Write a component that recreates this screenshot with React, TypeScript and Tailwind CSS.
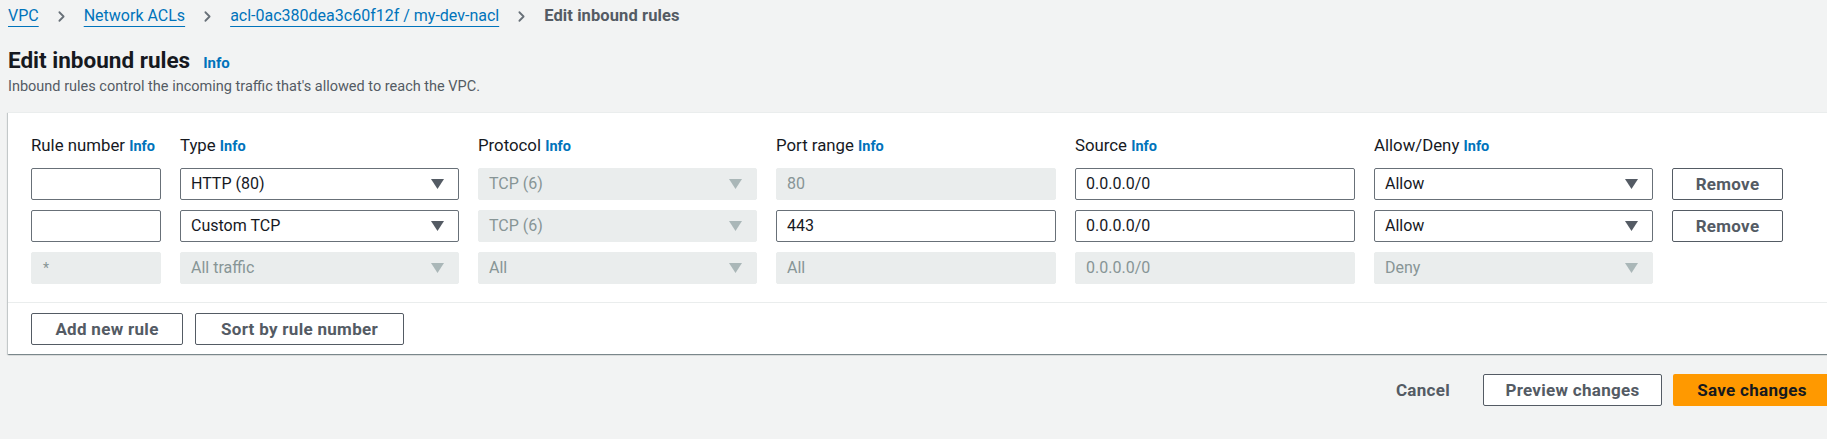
import { ChevronRight } from 'lucide-react'

// --- Types ---
type Cell =
  | { kind: 'input'; value: string; disabled?: boolean }
  | { kind: 'select'; value: string; disabled?: boolean }

type Rule = {
  cells: Cell[]
  removable: boolean
}

const font = { fontFamily: 'Roboto, "Open Sans", Arial, sans-serif' }

const rules: Rule[] = [
  {
    cells: [
      { kind: 'input', value: '' },
      { kind: 'select', value: 'HTTP (80)' },
      { kind: 'select', value: 'TCP (6)', disabled: true },
      { kind: 'input', value: '80', disabled: true },
      { kind: 'input', value: '0.0.0.0/0' },
      { kind: 'select', value: 'Allow' },
    ],
    removable: true,
  },
  {
    cells: [
      { kind: 'input', value: '' },
      { kind: 'select', value: 'Custom TCP' },
      { kind: 'select', value: 'TCP (6)', disabled: true },
      { kind: 'input', value: '443' },
      { kind: 'input', value: '0.0.0.0/0' },
      { kind: 'select', value: 'Allow' },
    ],
    removable: true,
  },
  {
    cells: [
      { kind: 'input', value: '*', disabled: true },
      { kind: 'select', value: 'All traffic', disabled: true },
      { kind: 'select', value: 'All', disabled: true },
      { kind: 'input', value: 'All', disabled: true },
      { kind: 'input', value: '0.0.0.0/0', disabled: true },
      { kind: 'select', value: 'Deny', disabled: true },
    ],
    removable: false,
  },
]

const headers = ['Rule number', 'Type', 'Protocol', 'Port range', 'Source', 'Allow/Deny']

// --- Small pieces ---
const Caret: React.FC<{ disabled?: boolean }> = ({ disabled }) => (
  <svg width="13" height="10" viewBox="0 0 13 10" className="shrink-0">
    <path d="M0 0 H13 L6.5 10 Z" fill={disabled ? '#aab7b8' : '#545b64'} />
  </svg>
)

const Field: React.FC<{ cell: Cell }> = ({ cell }) => {
  const base = cell.disabled
    ? 'bg-[#eaeded] border-[#eaeded] text-[#879596]'
    : 'bg-white border-[#687078] text-[#16191f]'
  return (
    <div className={`h-8 flex items-center justify-between border rounded-[2px] pl-[10px] pr-[14px] text-[16px] ${base}`}>
      <span className={cell.value === '*' ? 'text-[14px] pl-[1px]' : ''}>{cell.value}</span>
      {cell.kind === 'select' && <Caret disabled={cell.disabled} />}
    </div>
  )
}

const Button: React.FC<{ label: string; className?: string }> = ({ label, className = '' }) => (
  <button className={`h-8 border border-[#545b64] bg-white rounded-[2px] text-[17px] tracking-[0.3px] font-bold text-[#545b64] ${className}`}>
    {label}
  </button>
)

const Crumb: React.FC<{ label: string }> = ({ label }) => (
  <a className="text-[#0073bb] underline underline-offset-[5px] decoration-1">{label}</a>
)

// --- Main ---
export default function App() {
  return (
    <div className="bg-[#f2f3f3] h-[439px] w-full overflow-hidden" style={font}>
      <div className="pl-2 w-[1831px]">
        <nav className="flex items-center h-[22px] mt-[5px] text-[16px]">
          <Crumb label="VPC" />
          <ChevronRight size={17} strokeWidth={2.5} className="text-[#687078] mx-[14px]" />
          <Crumb label="Network ACLs" />
          <ChevronRight size={17} strokeWidth={2.5} className="text-[#687078] mx-[14px]" />
          <Crumb label="acl-0ac380dea3c60f12f / my-dev-nacl" />
          <ChevronRight size={17} strokeWidth={2.5} className="text-[#687078] mx-[14px]" />
          <span className="font-bold text-[#545b64] text-[16.5px] tracking-[0.1px]">Edit inbound rules</span>
        </nav>

        <div className="mt-[20px] flex items-baseline gap-[13px]">
          <h1 className="text-[22.5px] font-bold text-[#16191f] leading-[27px]">Edit inbound rules</h1>
          <span className="text-[15px] font-bold text-[#0073bb]">Info</span>
        </div>
        <p className="text-[14.5px] text-[#545b64] mt-[1px]">
          Inbound rules control the incoming traffic that's allowed to reach the VPC.
        </p>

        <section className="mt-[15px] bg-white border-t border-[#eaeded] shadow-[0_1px_1px_0_rgba(0,28,36,0.3),1px_1px_1px_0_rgba(0,28,36,0.15),-1px_1px_1px_0_rgba(0,28,36,0.15)]">
          <div className="px-[23px] pt-[22px] pb-[18px]">
            <div className="grid grid-cols-[130px_279px_279px_280px_280px_279px_111px] gap-x-[19px] gap-y-[10px]">
              {headers.map(h => (
                <div key={h} className="text-[16.8px] text-[#16191f] leading-5 mb-[1px] whitespace-nowrap">
                  {h} <span className="text-[14.5px] font-bold text-[#0073bb]">Info</span>
                </div>
              ))}
              <div />
              {rules.map((rule, i) => (
                <>
                  {rule.cells.map((cell, j) => (
                    <Field key={`${i}-${j}`} cell={cell} />
                  ))}
                  {rule.removable ? <Button key={`rm-${i}`} label="Remove" /> : <div key={`rm-${i}`} />}
                </>
              ))}
            </div>
          </div>
          <div className="border-t border-[#eaeded] px-[23px] pt-[10px] pb-[9px] flex gap-[12px]">
            <Button label="Add new rule" className="w-[152px]" />
            <Button label="Sort by rule number" className="w-[209px]" />
          </div>
        </section>

        <div className="mt-[20px] flex justify-end items-center">
          <button className="h-8 px-5 text-[17px] tracking-[0.3px] font-bold text-[#545b64] mr-[13px]">Cancel</button>
          <Button label="Preview changes" className="w-[179px] mr-[11px]" />
          <button className="h-8 w-[158px] rounded-[2px] bg-[#ff9900] text-[17px] tracking-[0.3px] font-bold text-[#16191f]">
            Save changes
          </button>
        </div>
      </div>
    </div>
  )
}
